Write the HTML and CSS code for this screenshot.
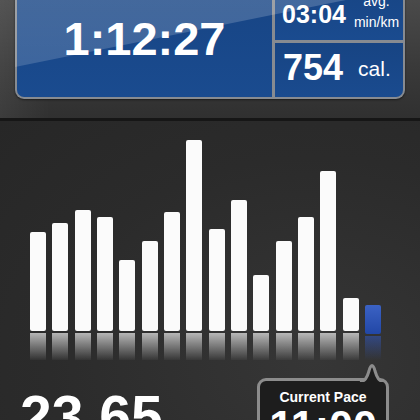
FILE: index.html
```html
<!DOCTYPE html>
<html lang="en">
<head>
  <meta charset="UTF-8">
  <meta name="viewport" content="width=device-width, initial-scale=1.0">
  <title>Run Summary</title>
  <link rel="stylesheet" href="styles.css">
</head>
<body>
  <div class="top">
    <div class="panel">
      <div class="cell cell-time">1:12:27</div>
      <div class="cell cell-pace">
        <span class="pace-value">03:04</span>
        <span class="pace-unit">avg.<br>min/km</span>
      </div>
      <div class="cell cell-cal">
        <span class="cal-value">754</span>
        <span class="cal-unit">cal.</span>
      </div>
    </div>
  </div>

  <div class="chart">
    <div class="bars">
      <div class="col"><div class="bar" style="height: 99px"></div><div class="reflect"></div></div>
      <div class="col"><div class="bar" style="height: 108px"></div><div class="reflect"></div></div>
      <div class="col"><div class="bar" style="height: 121px"></div><div class="reflect"></div></div>
      <div class="col"><div class="bar" style="height: 114px"></div><div class="reflect"></div></div>
      <div class="col"><div class="bar" style="height: 71px"></div><div class="reflect"></div></div>
      <div class="col"><div class="bar" style="height: 90px"></div><div class="reflect"></div></div>
      <div class="col"><div class="bar" style="height: 119px"></div><div class="reflect"></div></div>
      <div class="col"><div class="bar" style="height: 191px"></div><div class="reflect"></div></div>
      <div class="col"><div class="bar" style="height: 102px"></div><div class="reflect"></div></div>
      <div class="col"><div class="bar" style="height: 131px"></div><div class="reflect"></div></div>
      <div class="col"><div class="bar" style="height: 56px"></div><div class="reflect"></div></div>
      <div class="col"><div class="bar" style="height: 90px"></div><div class="reflect"></div></div>
      <div class="col"><div class="bar" style="height: 114px"></div><div class="reflect"></div></div>
      <div class="col"><div class="bar" style="height: 160px"></div><div class="reflect"></div></div>
      <div class="col"><div class="bar" style="height: 33px"></div><div class="reflect"></div></div>
      <div class="col current"><div class="bar" style="height: 29px"></div><div class="reflect"></div></div>
    </div>

    <div class="bottom">
      <div class="distance">23.65</div>
      <div class="bubble">
        <svg class="pointer" width="26" height="18" viewBox="0 0 26 18">
          <path d="M1 18 C6 17 8 14 10 7 C11 3 12 1.5 13 1.5 C14 1.5 15 3 16 7 C18 14 20 17 25 18" fill="#1d1d1d" stroke="#8c8c8c" stroke-width="3"/>
        </svg>
        <div class="bubble-title">Current Pace</div>
        <div class="bubble-value">11:00</div>
      </div>
    </div>
  </div>
</body>
</html>
```

FILE: styles.css
```css
body {
  margin: 0;
  width: 420px;
  height: 420px;
  overflow: hidden;
  font-family: "Liberation Sans", Arial, sans-serif;
  color: #fff;
  background-color: #2a2a2a;
}

.top {
  display: flow-root;
  height: 118px;
  border-bottom: 3px solid #161616;
  background:
    linear-gradient(to right, rgba(255, 255, 255, 0.06), rgba(255, 255, 255, 0) 12%),
    linear-gradient(to bottom, #4a4a4a 0%, #3a3a3a 55%, #303030 100%);
}

.panel {
  position: relative;
  margin: -20px 15px 0 15px;
  display: grid;
  grid-template-columns: 255px 128px;
  grid-template-rows: 60px 54px;
  column-gap: 3px;
  row-gap: 3px;
  padding: 0 2px 2px 2px;
  background-color: #878b91;
  border-radius: 0 0 9px 9px;
  box-shadow: 0 1px 2px rgba(0, 0, 0, 0.5);
  overflow: hidden;
}

/* glossy highlight across the top of the panel */
.panel::after {
  content: "";
  position: absolute;
  inset: 0;
  background: linear-gradient(to bottom, rgba(255, 255, 255, 0.2), rgba(255, 255, 255, 0.14));
  clip-path: polygon(0 0, 100% 0, 100% 8px, 0 87px);
  pointer-events: none;
}

.cell {
  background: linear-gradient(to bottom, #174483, #1a4b8f);
  display: flex;
  align-items: center;
}

.cell-time {
  grid-row: 1 / 3;
  justify-content: center;
  font-size: 47px;
  font-weight: bold;
  border-radius: 0 0 0 7px;
}

.cell-pace {
  align-items: flex-end;
  padding: 0 0 13px 7px;
}

.pace-value {
  font-size: 25px;
  font-weight: bold;
  line-height: 25px;
}

.pace-unit {
  margin-left: 8px;
  margin-bottom: -6px;
  font-size: 14px;
  line-height: 21px;
  text-align: center;
}

.cell-cal {
  padding: 0 0 4px 8px;
  border-radius: 0 0 7px 0;
}

.cal-value {
  font-size: 36px;
  font-weight: bold;
  line-height: 36px;
}

.cal-unit {
  margin-left: 15px;
  font-size: 21px;
  line-height: 21px;
}

.chart {
  background: radial-gradient(ellipse at 75% 80%, #363636 0%, #2b2b2b 60%, #272727 100%);
  height: 299px;
  overflow: hidden;
}

.bars {
  display: grid;
  grid-template-columns: repeat(16, 16px);
  column-gap: 6.33px;
  padding-left: 30px;
  height: 239px;
}

.col {
  display: flex;
  flex-direction: column;
  justify-content: flex-end;
}

.bar {
  background-color: #fbfbfb;
  border-radius: 2px;
}

.reflect {
  margin-top: 2px;
  height: 27px;
  background: linear-gradient(to bottom, rgba(255, 255, 255, 0.65), rgba(255, 255, 255, 0.03));
}

.current .bar {
  background: linear-gradient(to bottom, #3b62c4, #2247a6);
}

.current .reflect {
  height: 24px;
  background: linear-gradient(to bottom, rgba(50, 85, 180, 0.6), rgba(50, 85, 180, 0));
}

.bottom {
  display: flex;
  justify-content: space-between;
  align-items: flex-start;
  padding: 0 31px 0 20px;
}

.distance {
  margin-top: 28px;
  font-size: 57px;
  font-weight: bold;
  line-height: 57px;
}

.bubble {
  position: relative;
  margin-top: 18px;
  width: 126px;
  height: 60px;
  border: 3px solid #8c8c8c;
  border-radius: 9px;
  background-color: #1d1d1d;
  text-align: center;
}

.pointer {
  position: absolute;
  top: -17px;
  right: 1px;
}

.bubble-title {
  margin-top: 9px;
  font-size: 14px;
  font-weight: bold;
  line-height: 14px;
}

.bubble-value {
  font-size: 43px;
  font-weight: bold;
  line-height: 43px;
}
```
